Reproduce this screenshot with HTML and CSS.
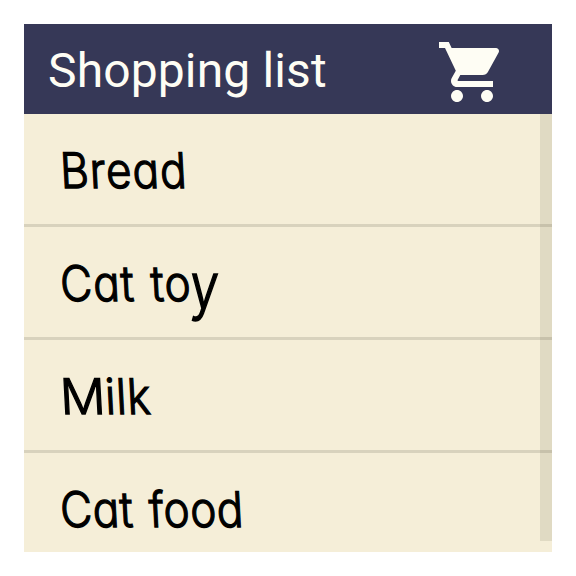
FILE: index.html
```html
<!DOCTYPE html>
<html lang="en">
<head>
<meta charset="utf-8">
<title>Shopping list</title>
<link rel="stylesheet" href="styles.css">
</head>
<body>
<main class="card">
  <header class="toolbar">
    <h1 class="title">Shopping list</h1>
    <svg class="cart" viewBox="0 0 24 24" aria-hidden="true"><path d="M7 18c-1.1 0-1.99.9-1.99 2S5.9 22 7 22s2-.9 2-2-.9-2-2-2zM1 2v2h2l3.6 7.59-1.35 2.45c-.16.28-.25.61-.25.96 0 1.1.9 2 2 2h12v-2H7.42c-.14 0-.25-.11-.25-.25l.03-.12.9-1.63h7.45c.75 0 1.41-.41 1.75-1.03l3.58-6.49c.08-.14.12-.31.12-.48 0-.55-.45-1-1-1H5.21l-.94-2H1zm16 16c-1.1 0-1.99.9-1.99 2s.89 2 1.99 2 2-.9 2-2-.9-2-2-2z"/></svg>
  </header>
  <ul class="list">
    <li class="item"><span class="label bread">Bread</span></li>
    <li class="item"><span class="label toy">Cat to<span class="tail">y</span></span></li>
    <li class="item"><span class="label milk"><span class="wide">M</span>ilk</span></li>
    <li class="item"><span class="label food">Cat food</span></li>
  </ul>
</main>
</body>
</html>
```
FILE: styles.css
```css
body {
  margin: 0;
  padding: 24px;
  background: #fff;
}

.card {
  width: 528px;
  height: 528px;
  overflow: hidden;
  background: #f5eed8;
}

.toolbar {
  display: flex;
  align-items: center;
  justify-content: space-between;
  box-sizing: border-box;
  height: 90px;
  padding: 0 44px 0 24px;
  background: #363857;
  color: #fefdf4;
}

.title {
  margin: 0;
  font: 400 48px/56px Roboto, sans-serif;
  letter-spacing: 0.13px;
  padding-top: 3px;
}

.cart {
  width: 72px;
  height: 72px;
  padding-top: 6px;
  fill: currentColor;
}

.list {
  position: relative;
  height: 438px;
  margin: 0;
  padding: 0;
  list-style: none;
}

.list::after {
  content: "";
  position: absolute;
  top: 0;
  right: 0;
  width: 12px;
  height: 427px;
  background: rgba(80, 80, 50, 0.125);
}

.item {
  display: flex;
  align-items: center;
  height: 110px;
  padding-left: 36px;
  border-bottom: 3px solid #d8d2bd;
}

.item:last-child {
  border-bottom: 0;
}

.label {
  font: 300 49px/60px Inter, "Open Sans", sans-serif;
  font-feature-settings: "cv11" 1;
  color: #000;
  white-space: nowrap;
  padding-top: 4px;
  transform-origin: 0 50%;
  transform: skewX(3deg) scaleX(0.9);
  -webkit-text-stroke: 1.3px #000;
}

.bread {
  letter-spacing: 1.1px;
}

.toy,
.food {
  letter-spacing: 0.7px;
  word-spacing: 3px;
}

.toy {
  letter-spacing: 1px;
}

.food {
  letter-spacing: 0.5px;
}

.milk {
  letter-spacing: 0.8px;
}

.wide {
  display: inline-block;
  margin-right: 5px;
  transform-origin: 0 50%;
  transform: scaleX(1.14);
}

.tail {
  display: inline-block;
  transform-origin: 0 34%;
  transform: skewX(-6deg) scale(1.15, 1.27);
}
```
